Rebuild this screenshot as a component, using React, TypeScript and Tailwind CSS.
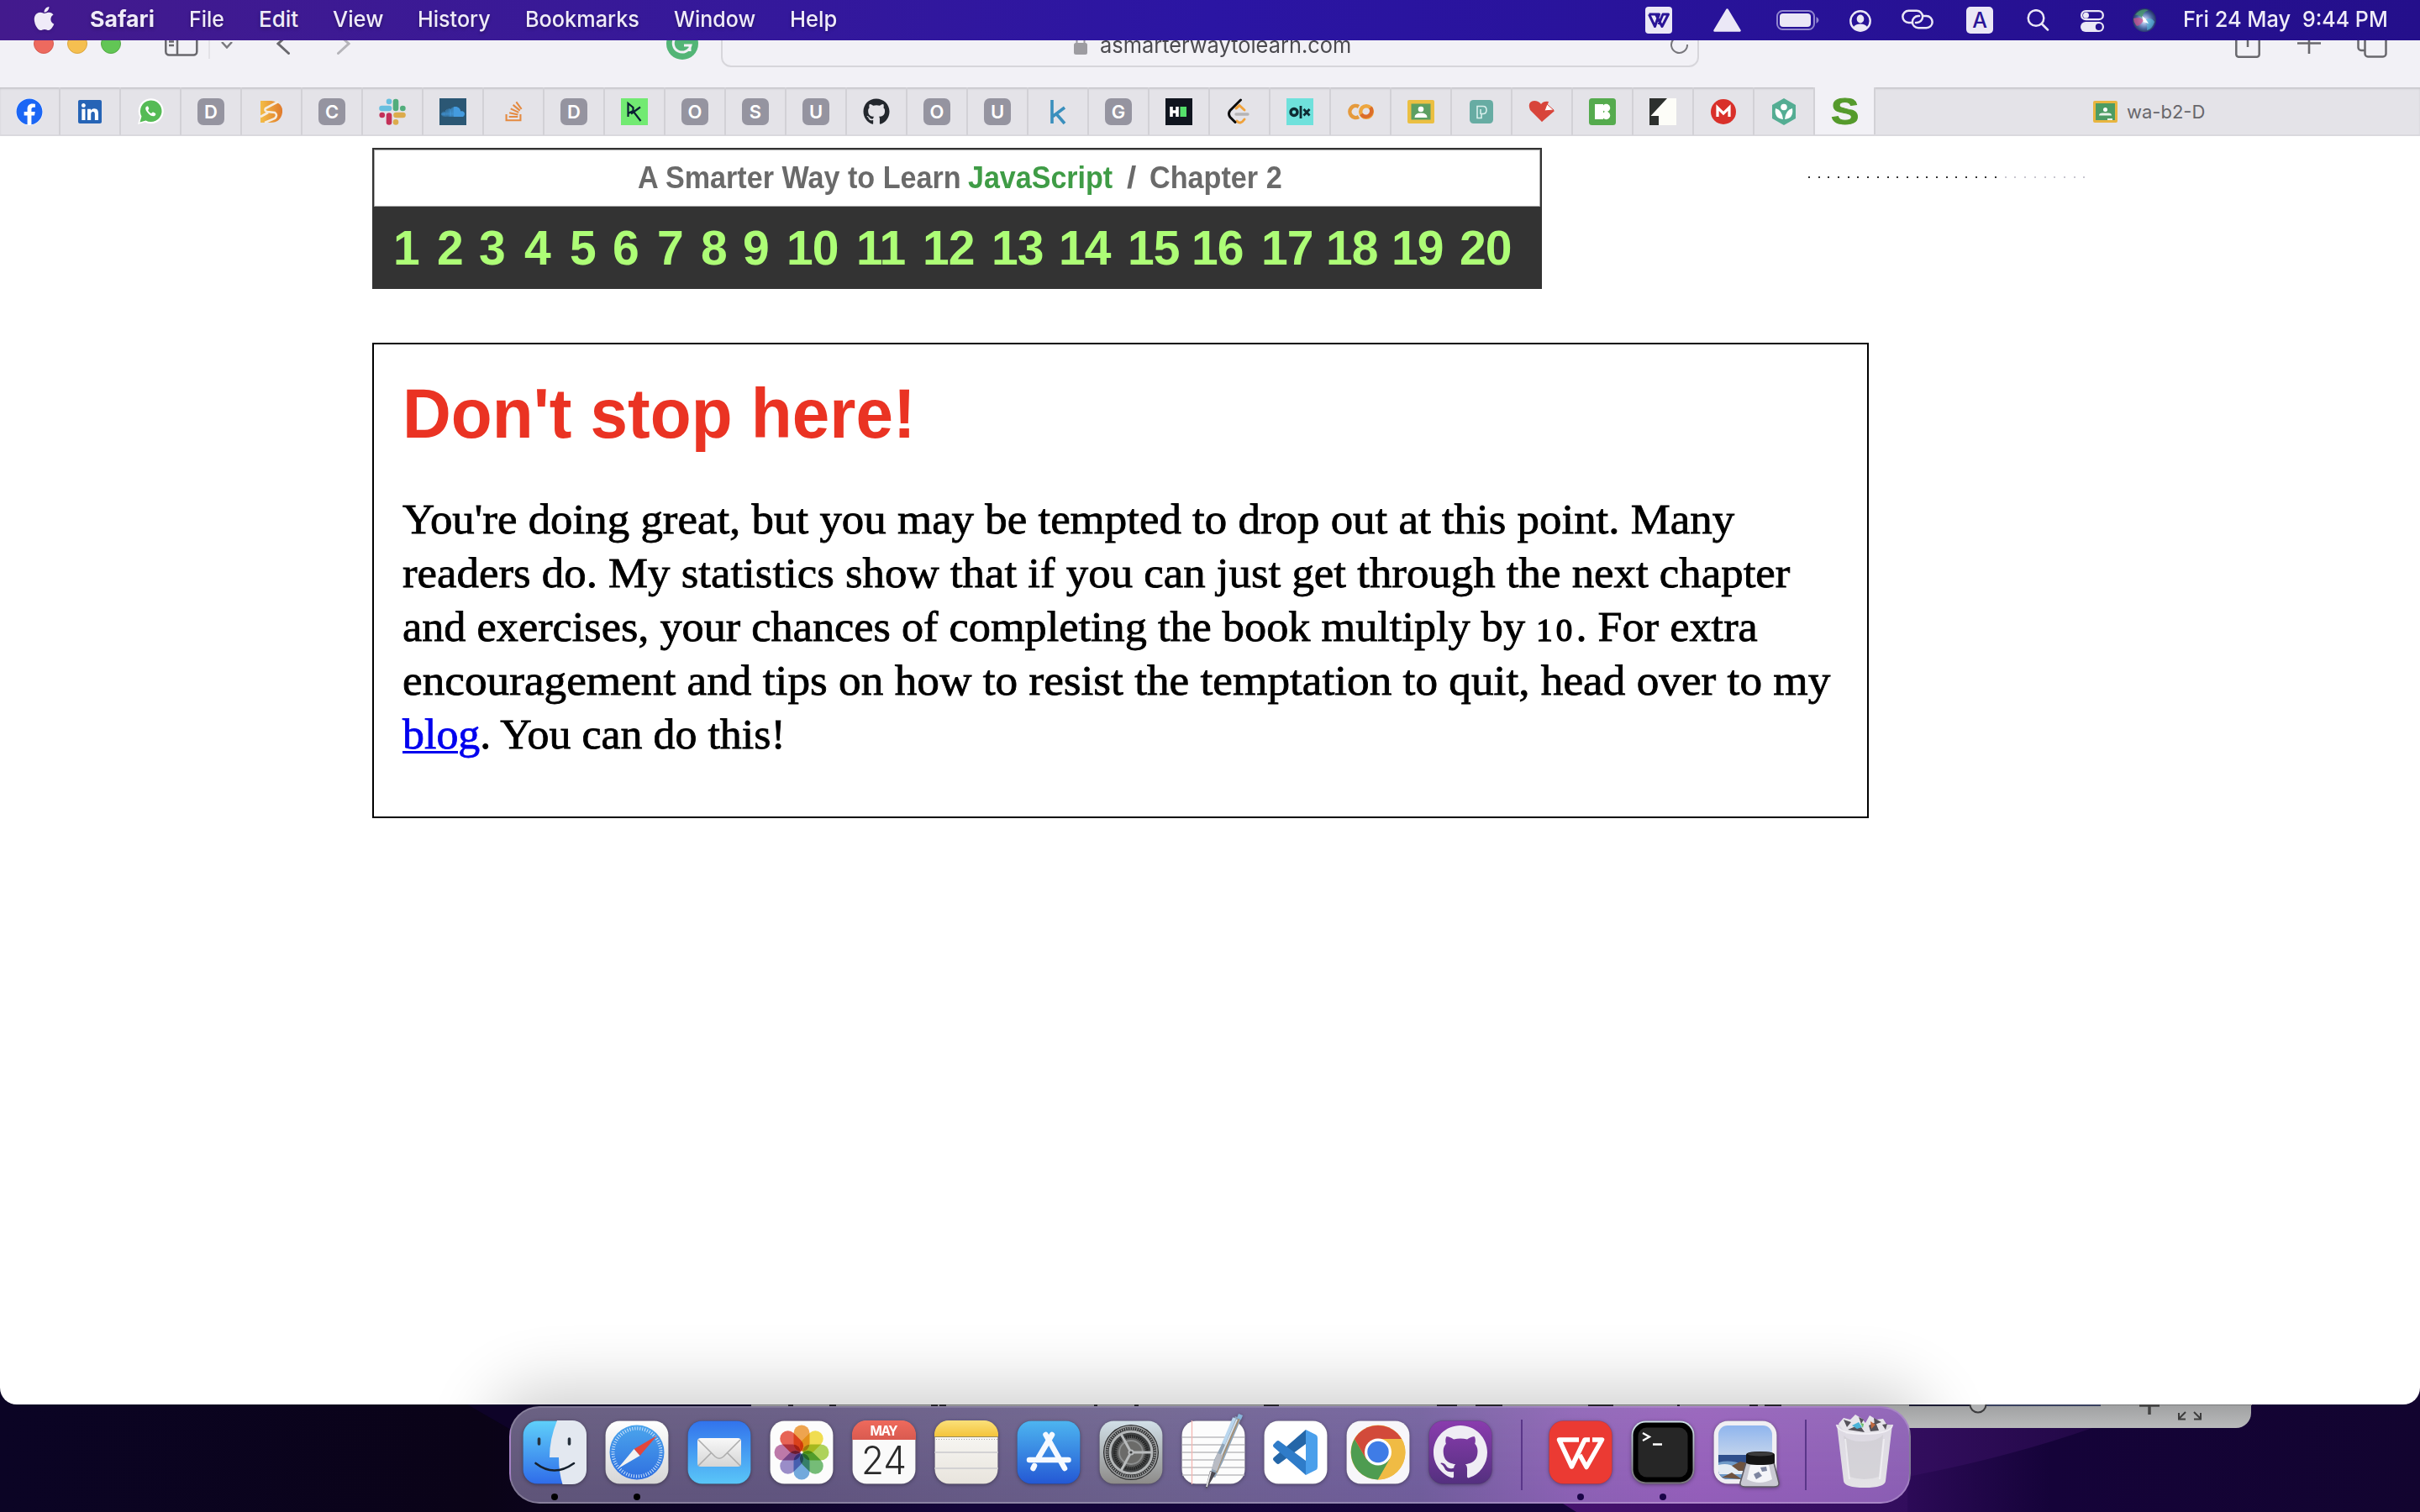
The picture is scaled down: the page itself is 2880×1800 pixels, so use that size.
import React, { useLayoutEffect, useRef, useState } from "react";
import {
  FaApple,
  FaFacebook,
  FaGithub,
  FaLinkedin,
  FaStackOverflow,
  FaSoundcloud,
} from "react-icons/fa";

/** One line of text stretched to an exact width. */
function Fit({ w, className = "", children }: { w: number; className?: string; children: React.ReactNode }) {
  const ref = useRef<HTMLSpanElement>(null);
  const [scale, setScale] = useState(1);
  useLayoutEffect(() => {
    if (ref.current) setScale(w / ref.current.offsetWidth);
  }, [w]);
  return (
    <span className={"block shrink-0 whitespace-nowrap " + className} style={{ width: w }}>
      <span ref={ref} className="inline-block origin-left" style={{ transform: `scaleX(${scale})` }}>
        {children}
      </span>
    </span>
  );
}

/* ---------- Menu bar ---------- */

const menus: [string, number][] = [
  ["File", 42],
  ["Edit", 47],
  ["View", 60],
  ["History", 87],
  ["Bookmarks", 136],
  ["Window", 97],
  ["Help", 56],
];

function MenuBar() {
  return (
    <header className="relative z-10 flex h-12 items-center bg-gradient-to-r from-[#431a8d] via-[#2b15a3] to-[#240f8b] pl-10 text-[26px] leading-[31px] text-[#efebf8]">
      <FaApple className="-mt-1 -ml-[3px] mr-[-3px] h-8 w-[31px] shrink-0 drop-shadow" />
      <nav className="flex gap-[41px] pb-[3px] pl-[42px] [text-shadow:0_2px_4px_rgba(0,0,0,0.3)]">
        <Fit w={77} className="font-bold">Safari</Fit>
        {menus.map(([m, w]) => (
          <Fit key={m} w={w} className="font-medium">{m}</Fit>
        ))}
      </nav>
      <svg className="ml-[962px] h-8 w-8 shrink-0" viewBox="0 0 32 32">
        <rect width="32" height="32" rx="4" fill="#ebe8f6" />
        <path d="M4.500 9h12L11.500 23.500 4.500 9M12.500 9l7.500 14.500L27.500 9H21l-5 12" fill="none" stroke="#2a1597" strokeWidth="3" strokeLinejoin="round" />
      </svg>
      <svg className="ml-[49px] h-7 w-[33px] shrink-0" viewBox="0 0 33 28">
        <path d="M16.5 1.5 31.5 26.5H1.5Z" fill="#ebe8f6" stroke="#ebe8f6" strokeWidth="2.5" strokeLinejoin="round" />
      </svg>
      <svg className="ml-[42px] h-6 w-[51px] shrink-0" viewBox="0 0 51 24">
        <rect x="1" y="1" width="44" height="22" rx="6.5" fill="none" stroke="#9186cf" strokeWidth="2" />
        <rect x="4" y="4" width="37" height="16" rx="4" fill="#ebe8f6" />
        <path d="M47.5 8q3 1.500 3 4t-3 4z" fill="#9186cf" />
      </svg>
      <svg className="ml-9 mt-[2px] h-[26px] w-[26px] shrink-0" viewBox="0 0 26 26">
        <circle cx="13" cy="13" r="11.7" fill="none" stroke="#ebe8f6" strokeWidth="2.4" />
        <ellipse cx="13" cy="10.500" rx="4.300" ry="5" fill="#ebe8f6" />
        <path d="M4.500 20.500q2.500-4 8.500-4t8.500 4q-3.500 4-8.500 4t-8.500-4z" fill="#ebe8f6" />
      </svg>
      <svg className="ml-9 -mt-[2px] h-6 w-[38px] shrink-0" viewBox="0 0 38 24" fill="none" stroke="#ebe8f6" strokeWidth="2.500" strokeLinecap="round">
        <path d="M12 16H8.500A7 7 0 0 1 8.500 1.700H18A7 7 0 0 1 18 16H17" />
        <path d="M26 8h3.500a7 7 0 0 1 0 14.300H20A7 7 0 0 1 20 8h1" />
      </svg>
      <span className="ml-[39px] flex h-8 w-8 shrink-0 items-center justify-center rounded-[5px] bg-[#ebe8f6] text-[25px] font-medium text-[#2a1597]">A</span>
      <svg className="ml-10 h-[26px] w-[27px] shrink-0" viewBox="0 0 27 26" fill="none" stroke="#ebe8f6" strokeWidth="2.500" strokeLinecap="round">
        <circle cx="11" cy="10.500" r="9.300" />
        <path d="m18 17.500 7 7" />
      </svg>
      <svg className="ml-[37px] mt-[2px] h-[26px] w-7 shrink-0" viewBox="0 0 28 26">
        <rect x="1.200" y="1.200" width="25.600" height="10" rx="5" fill="none" stroke="#ebe8f6" strokeWidth="2.300" />
        <circle cx="6.500" cy="6.200" r="3.500" fill="#ebe8f6" />
        <rect y="14" width="28" height="12" rx="6" fill="#ebe8f6" />
        <circle cx="21.800" cy="20" r="4" fill="#26118f" />
      </svg>
      <svg className="ml-[34px] h-7 w-7 shrink-0" viewBox="0 0 28 28">
        <defs>
          <radialGradient id="siri" cx="50%" cy="52%" r="50%">
            <stop offset="0" stopColor="#fff" />
            <stop offset=".3" stopColor="#9fb4e0" />
            <stop offset=".7" stopColor="#47649f" />
            <stop offset="1" stopColor="#263468" />
          </radialGradient>
        </defs>
        <circle cx="14" cy="14" r="14" fill="url(#siri)" />
        <path d="M3 8Q9-1 19 2q-8 3-7 10-5-5-9-4z" fill="#4a9a6b" opacity=".8" />
        <path d="M1 12q8-3 12 2-3 6-8 7-4-4-4-9z" fill="#c9528c" opacity=".75" />
        <path d="M14 14q8-5 12 2-3 9-9 10 1-7-3-12z" fill="#58bfe0" opacity=".6" />
        <path d="m11 9 4 3 4 6-6-2z" fill="#fff" />
      </svg>
      <div className="flex pb-[3px] font-medium">
        <Fit w={128} className="ml-[32px]">Fri 24 May</Fit>
        <Fit w={102} className="ml-[14px]">9:44 PM</Fit>
      </div>
    </header>
  );
}

/* ---------- Browser toolbar ---------- */

function Toolbar() {
  return (
    <div className="h-14 overflow-hidden bg-[#f2f1f6]">
      <div className="-mt-12 flex h-[104px] translate-y-0 items-center pl-10">
        <div className="flex gap-4">
          <i className="h-6 w-6 rounded-full border border-[#d65a50] bg-[#ed6a5f]" />
          <i className="h-6 w-6 rounded-full border border-[#dba63f] bg-[#f5bf50]" />
          <i className="h-6 w-6 rounded-full border border-[#55a945] bg-[#62c655]" />
        </div>
        <svg className="ml-[52px] h-[30px] w-10 shrink-0" viewBox="0 0 40 30" fill="none" stroke="#69686d" strokeWidth="2.500">
          <rect x="1.300" y="1.300" width="37" height="27.200" rx="4" />
          <path d="M15 1v28M5 8h6M5 12.500h6M5 17h6" />
        </svg>
        <i className="ml-3 h-9 w-[2px] bg-[#e3e2e7]" />
        <svg className="ml-[13px] mt-1 h-2 w-[14px] shrink-0" viewBox="0 0 14 8" fill="none" stroke="#7a797e" strokeWidth="2.500">
          <path d="m1 0 6 6.500L13 0" />
        </svg>
        <svg className="ml-[52px] h-[26px] w-4 shrink-0" viewBox="0 0 16 26" fill="none" stroke="#69686d" strokeWidth="3" strokeLinecap="round">
          <path d="M14.500 1.500 2 13l12.500 11.500" />
        </svg>
        <svg className="ml-14 h-[26px] w-4 shrink-0" viewBox="0 0 16 26" fill="none" stroke="#b5b4b9" strokeWidth="3" strokeLinecap="round">
          <path d="M1.500 1.500 14 13 1.500 24.500" />
        </svg>
        <svg className="ml-[376px] h-[38px] w-[38px] shrink-0" viewBox="0 0 38 38">
          <circle cx="19" cy="19" r="19" fill="#53b576" />
          <path d="M27 12a10.500 10.500 0 1 0 2 9h-8M28 28v-7" fill="none" stroke="#f2f1f6" strokeWidth="3" />
        </svg>
        <div className="ml-[27px] flex h-14 w-[1164px] shrink-0 items-center rounded-xl border-2 border-[#d7d6db]">
          <svg className="ml-[418px] h-[25px] w-4 shrink-0" viewBox="0 0 16 25">
            <path d="M3.500 12V7a4.500 4.500 0 0 1 9 0v5" fill="none" stroke="#9d9ca1" strokeWidth="2" />
            <rect y="11" width="16" height="14" rx="2.500" fill="#9d9ca1" />
          </svg>
          <Fit w={299} className="ml-[15px] mt-[3px] text-[26px] leading-[31px] text-[#4b4a4f]">asmarterwaytolearn.com</Fit>
          <svg className="ml-auto mr-[10px] h-6 w-[22px]" viewBox="0 0 22 24" fill="none" stroke="#77767b" strokeWidth="2">
            <path d="M4 6.500A9.500 9.500 0 1 0 20 13M5 7h6V2" />
          </svg>
        </div>
        <svg className="ml-[638px] h-9 w-[30px] shrink-0" viewBox="0 0 30 36" fill="none" stroke="#69686d" strokeWidth="2.500">
          <path d="M9 9H4a2.700 2.700 0 0 0-2.700 2.700V31A3 3 0 0 0 4 33.700h22a3 3 0 0 0 2.700-2.700V11.700A2.700 2.700 0 0 0 26 9h-5M15 22V2" />
        </svg>
        <svg className="ml-11 -mt-[3px] h-7 w-7 shrink-0" viewBox="0 0 28 28" stroke="#69686d" strokeWidth="2.600">
          <path d="M0 14.500h28M14 1v26" />
        </svg>
        <svg className="ml-[43px] h-9 w-9 shrink-0" viewBox="0 0 36 36" fill="none" stroke="#69686d" strokeWidth="2.500">
          <rect x="9.500" y="8" width="25" height="25.500" rx="3.500" />
          <path d="M9 26H5a3.500 3.500 0 0 1-3.500-3.500V4" />
        </svg>
      </div>
    </div>
  );
}

/* ---------- Tab strip ---------- */

function Letter({ c }: { c: string }) {
  return <span className="flex h-8 w-8 items-center justify-center rounded-[7px] bg-[#9594a0] text-[22px] leading-none font-semibold text-white">{c}</span>;
}

function Svg32({ children }: { children: React.ReactNode }) {
  return <svg className="h-8 w-8" viewBox="0 0 32 32">{children}</svg>;
}

const favicons: React.ReactNode[] = [
  <span className="rounded-full bg-white"><FaFacebook className="h-8 w-8 text-[#1b66f5]" /></span>,
  <span className="flex h-8 w-8 items-center justify-center"><FaLinkedin className="h-8 w-8 bg-[linear-gradient(white,white)] bg-[length:22px_22px] bg-center bg-no-repeat text-[#2664b6]" /></span>,
  <Svg32>
    <path d="M1 31 3.500 22.500A15 15 0 1 1 9.500 28.500z" fill="#fff" />
    <path d="M3.500 28.500 5.500 21.500a12.800 12.800 0 1 1 5 5z" fill="#55bb55" />
    <path d="M12 9.500c-2.500 1-2.500 4 1 8s7.500 5 9 2.500c.7-1.200.3-2-.8-2.500l-2-1c-1-.3-1.500 1.500-2.200 1.500-1.500-.5-3.300-2.300-3.800-3.800 0-.8 1.200-1.200 1-2.200l-1-2.200c-.2-.5-.7-.5-1.200-.3z" fill="#fff" />
  </Svg32>,
  <Letter c="D" />,
  <Svg32>
    <defs><linearGradient id="sub" x1="0" x2="1"><stop offset="0" stopColor="#f3bd47" /><stop offset="1" stopColor="#e07a2c" /></linearGradient></defs>
    <path d="M3 3h13q14 2 13 14-2 12-14 12H3z" fill="url(#sub)" />
    <path d="M24 4 9 12q-2 3 2 4l9 1q4 3 0 7L8 29M3 22l9-5" stroke="#f5ecdf" strokeWidth="2.600" fill="none" />
  </Svg32>,
  <Letter c="C" />,
  <Svg32>
    <g strokeWidth="6.600" strokeLinecap="round">
      <path d="M3.500 12h8.500" stroke="#68bfdf" /><path d="M12 3.800v.1" stroke="#68bfdf" />
      <path d="M20 4v8" stroke="#52ad7c" /><path d="M28.300 12h.1" stroke="#52ad7c" />
      <path d="M20.500 20h8" stroke="#dcab4c" /><path d="M20 28.300v.1" stroke="#dcab4c" />
      <path d="M12 20.500v8" stroke="#c33058" /><path d="M3.700 20h.1" stroke="#c33058" />
    </g>
  </Svg32>,
  <span className="flex h-8 w-8 items-center justify-center bg-[#2b5774]"><FaSoundcloud className="h-7 w-7 text-[#449bdf]" /></span>,
  <FaStackOverflow className="h-[27px] w-[27px] text-[#e48a41]" />,
  <Letter c="D" />,
  <Svg32>
    <rect width="32" height="32" fill="#72ea72" />
    <path d="M8.500 18V6l6 5v4l-6 3v4M23 10.500 12 18.500M15 16l8.500 11" fill="none" stroke="#0b1f33" strokeWidth="2.200" />
  </Svg32>,
  <Letter c="O" />,
  <Letter c="S" />,
  <Letter c="U" />,
  <FaGithub className="h-8 w-8 text-[#23272d]" />,
  <Letter c="O" />,
  <Letter c="U" />,
  <Svg32><path d="M9 2v28M24 11 10 21.500M14.500 19 24 30" fill="none" stroke="#3a8fbd" strokeWidth="3.600" /></Svg32>,
  <Letter c="G" />,
  <Svg32>
    <rect width="32" height="32" fill="#10151f" />
    <path d="M7 10v12M14 10v12M7 16h7" stroke="#fff" strokeWidth="3.600" /><rect x="17.500" y="10" width="7.500" height="12" fill="#55e06a" />
  </Svg32>,
  <Svg32>
    <path d="M12 12l4-3.500 6 5.500M13 27q4 5 9-2" fill="none" stroke="#f0a23b" strokeWidth="3" strokeLinecap="round" />
    <path d="M17.500 2 5 14.500q-3 4 0 8l6 6" fill="none" stroke="#0c0c0c" strokeWidth="3" strokeLinecap="round" />
    <path d="M12 19h14" stroke="#b5b4b5" strokeWidth="3.400" strokeLinecap="round" />
  </Svg32>,
  <Svg32>
    <rect width="32" height="32" fill="#6fe1dc" />
    <circle cx="9" cy="16.500" r="4" fill="none" stroke="#0e2b33" strokeWidth="3.400" />
    <path d="M17 9v15M20.500 13l7 7.500M27.500 13l-7 7.500" stroke="#0e2b33" strokeWidth="2.800" />
  </Svg32>,
  <Svg32>
    <path d="M14 10a7 7 0 1 0 0 12" fill="none" stroke="#e59a3c" strokeWidth="4.500" />
    <circle cx="23" cy="16" r="6.800" fill="none" stroke="#eda63e" strokeWidth="4.500" />
    <path d="M17 19a6.800 6.800 0 0 0 11-8" fill="none" stroke="#dc6d2b" strokeWidth="4.500" />
  </Svg32>,
  <Svg32>
    <rect y="2" width="32" height="28" rx="2" fill="#ebbf42" /><rect x="4.500" y="6.500" width="23" height="19" fill="#5c9f62" />
    <circle cx="16" cy="13" r="3.300" fill="#fff" /><path d="M8.500 23q0-5.500 7.500-5.500t7.500 5.500z" fill="#fff" />
  </Svg32>,
  <Svg32>
    <rect x="2" y="2" width="28" height="28" rx="4.500" fill="#67aca3" />
    <path d="M11 9.500h7q4 0 4 4.500t-4 4.500h-2v5h-5zm4 3.500v6" fill="none" stroke="#d9efec" strokeWidth="1.600" />
  </Svg32>,
  <Svg32>
    <path d="M16 28 2 14Q-2 4 7 3q5 0 8 4 3-4 9-3" fill="#d8453b" />
    <path d="m16 28 15-13-8-6-11 9z" fill="#d8453b" /><path d="m22 7 8 7-11 1z" fill="#fff" stroke="#d8453b" />
  </Svg32>,
  <Svg32>
    <rect width="32" height="32" rx="3.500" fill="#55ab4e" />
    <rect x="7" y="7" width="10" height="18" fill="#fff" /><circle cx="20.500" cy="11.500" r="4.700" fill="#fff" /><circle cx="20.500" cy="20.500" r="4.700" fill="#fff" />
  </Svg32>,
  <Svg32><rect width="32" height="32" fill="#fdfdf8" /><path d="M0 0h21L1.500 21H11v11H0z" fill="#2d302e" /></Svg32>,
  <Svg32><circle cx="16" cy="16" r="15" fill="#d9302a" /><path d="M9 22V11l7 7 7-7v11" fill="none" stroke="#fff" strokeWidth="3.200" /></Svg32>,
  <Svg32>
    <path d="M16 0 30 8v16l-14 8L2 24V8z" fill="#54ad93" />
    <circle cx="16" cy="10.500" r="3.800" fill="#fff" /><path d="M15 25Q4 24 6 12q8 2 9 13zM17 25q11-1 9-13-8 2-9 13z" fill="#fff" />
  </Svg32>,
];

function TabStrip() {
  return (
    <div className="flex h-[58px] border-b-2 border-[#dad9de] bg-[#e4e3e8] shadow-[inset_0_2px_2px_#c9c8cd]">
      {favicons.map((icon, i) => (
        <div key={i} className="flex h-[57px] w-[72px] shrink-0 items-center justify-center border-r-2 border-[#d2d1d6]">{icon}</div>
      ))}
      <div className="flex h-14 w-[72px] shrink-0 items-center justify-center border-r-2 border-[#d2d1d6] bg-[#f2f1f6] text-[44px] leading-8 font-bold text-[#559a2c]">
        <Fit w={33} className="pt-[2px] font-['Liberation_Sans'] [-webkit-text-stroke:1px]">S</Fit>
      </div>
      <div className="flex h-14 flex-1 items-center pt-px pl-[259px]">
        <svg className="h-[26px] w-[29px]" viewBox="0 0 29 26">
          <rect width="29" height="26" rx="2" fill="#e8b53f" /><rect x="3" y="3" width="23" height="20" fill="#4c9c63" />
          <circle cx="14.500" cy="10.500" r="2.500" fill="#fff" /><path d="M7 17.500q0-3 4-3h7q4 0 4 3zM17 21h6v2h-6z" fill="#e9f3ea" />
        </svg>
        <Fit w={93} className="ml-[11px] text-[22px] leading-7 text-[#68676c]">wa-b2-D</Fit>
      </div>
    </div>
  );
}

/* ---------- Page ---------- */

const chapterWidths = [52, 50, 54, 54, 51, 53, 52, 50, 52, 83, 79, 82, 80, 82, 76, 83, 77, 78, 81, 70];

function Chapters() {
  return (
    <div className="w-[1392px] bg-[#333333] font-['Liberation_Sans'] font-bold">
      <div className="p-[2px] pb-0">
        <h2 className="flex h-[68px] bg-white pt-[13px] pl-[314px] text-[37px] leading-[41px] text-[#6a6a6a] shadow-[inset_0_0_0_1px_#aaa]">
          <Fit w={385}>A Smarter Way to Learn</Fit>
          <Fit w={172} className="ml-[8px] text-[#3f9c46]">JavaScript</Fit>
          <Fit w={11} className="ml-[17px]">/</Fit>
          <Fit w={158} className="ml-[16px]">Chapter 2</Fit>
        </h2>
      </div>
      <div className="flex h-[98px] pt-[16px] pl-[25px] text-[57px] leading-[66px] tracking-[-1px] text-[#adfd76]">
        {chapterWidths.map((w, i) => (
          <span key={i} className="shrink-0" style={{ width: w }}>{i + 1}</span>
        ))}
      </div>
    </div>
  );
}

function Page() {
  return (
    <main className="relative h-[1510px] overflow-hidden rounded-b-[20px] bg-white pt-[14px] pl-[443px]">
      <div className="flex">
        <Chapters />
        <div className="mt-[34px] ml-[317px] flex gap-[9.700px]">
          {Array.from({ length: 29 }, (_, i) => (
            <i key={i} className={i < 20 ? "h-[2px] w-[2px] bg-[#333]" : "h-[2px] w-[2px] bg-[#c8c6d0]"} />
          ))}
        </div>
      </div>
      <section className="mt-16 h-[566px] w-[1781px] border-2 border-black pt-[35px] pl-[34px]">
        <h1 className="font-['Liberation_Sans'] text-[84px] leading-[94px] font-bold text-[#ea3323]">
          <Fit w={611}>Don't stop here!</Fit>
        </h1>
        <p className="mt-[47px] font-['Liberation_Serif'] text-[51px] leading-[64px] text-black [-webkit-text-stroke:0.8px]">
          <Fit w={1585}>You're doing great, but you may be tempted to drop out at this point. Many</Fit>
          <Fit w={1651}>readers do. My statistics show that if you can just get through the next chapter</Fit>
          <Fit w={1613}>
            and exercises, your chances of completing the book multiply by <span className="text-[38px] leading-none tracking-[4px] [-webkit-text-stroke:1.4px]">10</span>. For extra
          </Fit>
          <Fit w={1699}>encouragement and tips on how to resist the temptation to quit, head over to my</Fit>
          <Fit w={456}>
            <a className="text-[#0000ee] underline decoration-[3px] underline-offset-[3px]">blog</a>. You can do this!
          </Fit>
        </p>
      </section>
      <div className="absolute -bottom-[118px] left-[606px] h-[116px] w-[1668px] rounded-[36px] shadow-[0_0_80px_20px_rgba(0,0,0,0.2)]" />
    </main>
  );
}

/* ---------- Desktop and dock ---------- */

function Wallpaper() {
  return (
    <svg className="absolute inset-x-0 bottom-0 h-[160px] w-full" viewBox="0 1640 2880 160">
      <defs>
        <linearGradient id="wall" x1="0" x2="1">
          <stop offset="0" stopColor="#0b0425" /><stop offset=".2" stopColor="#0a0317" />
          <stop offset=".4" stopColor="#14053a" /><stop offset=".85" stopColor="#150339" /><stop offset="1" stopColor="#12042f" />
        </linearGradient>
        <linearGradient id="hill" gradientUnits="userSpaceOnUse" x1="1820" x2="2500" y1="0" y2="0"><stop offset="0" stopColor="#47126f" /><stop offset=".7" stopColor="#310d5c" /><stop offset="1" stopColor="#210845" /></linearGradient>
        <linearGradient id="glow" gradientUnits="userSpaceOnUse" x1="2270" x2="2440" y1="0" y2="0"><stop offset="0" stopColor="#2c0a57" /><stop offset="1" stopColor="#2c0a57" stopOpacity="0" /></linearGradient>
        <linearGradient id="bar" x1="0" x2="0" y1="0" y2="1"><stop offset="0" stopColor="#949596" /><stop offset="1" stopColor="#b9babb" /></linearGradient>
      </defs>
      <rect y="1640" width="2880" height="160" fill="url(#wall)" />
      <path d="M556 1672 760 1790 1340 1790 1340 1672z" fill="#0e0328" />
      <rect x="2270" y="1700" width="170" height="100" fill="url(#glow)" />
      <path d="M1860 1790 1820 1672H2560L2490 1700Q2390 1735 2270 1758V1800H1876z" fill="url(#hill)" />
      <path d="M894 1660h1785v22a18 18 0 0 1-18 18H894z" fill="url(#bar)" />
      <path d="M894 1672.500h1786" stroke="#77787a" />
      <path d="M2272 1673h92" stroke="#1b1b33" strokeWidth="2" /><path d="M2364 1673h136" stroke="#39405f" strokeWidth="2" />
      <circle cx="2354" cy="1672" r="9.500" fill="#b0b1b2" stroke="#3b3b3d" strokeWidth="2" />
      <path d="M2546 1673h24M2558 1672v12" stroke="#444" strokeWidth="3.500" />
      <path d="m2601 1681-8 8M2593 1682v7.500h8M2611 1681l8 8M2619 1682v7.500h-8" stroke="#3d3d3d" strokeWidth="2" fill="none" />
      <path d="M938 1673h6M987 1673h8M1108 1673h8M1118 1673h8M1302 1673h4M1350 1673h5M1504 1673h18M1710 1673h24M1756 1673h32M1890 1673h30M1996 1673h3M2082 1673h10M2100 1673h20" stroke="#26262a" strokeWidth="2" />
    </svg>
  );
}

function AppIcon({ children, bg, stroke = "rgba(0,0,0,.08)" }: { children?: React.ReactNode; bg: string; stroke?: string }) {
  return (
    <svg className="h-[76px] w-[76px] overflow-visible drop-shadow-[0_1px_2px_rgba(0,0,0,0.35)]" viewBox="0 0 76 76">
      <rect x=".5" y=".5" width="75" height="75" rx="17" fill={bg} stroke={stroke} />
      {children}
    </svg>
  );
}

function Defs() {
  const g: [string, string, string][] = [
    ["finder", "#5fd0fa", "#2f6ce9"],
    ["white", "#ffffff", "#d6d6d6"],
    ["compass", "#4ba5ec", "#2f6fe0"],
    ["mail", "#3273ec", "#5ac6f8"],
    ["env", "#f8f8f8", "#d5d5d5"],
    ["notes", "#fbfbf8", "#e8e4dd"],
    ["noteTop", "#fae07a", "#f4c43b"],
    ["store", "#4db5f0", "#2458d4"],
    ["gear", "#d2e0e8", "#8d8b89"],
    ["git", "#8a3cae", "#54307f"],
    ["calTop", "#ee6a5c", "#d95a50"],
    ["sky", "#8fb5ee", "#c3d4ec"],
    ["term", "#d0e2ea", "#77747a"],
    ["can", "#dcd8e2", "#e4e3e6"],
  ];
  return (
    <svg className="absolute h-0 w-0">
      <defs>
        {g.map(([id, a, b]) => (
          <linearGradient key={id} id={id} x1="0" x2="0" y1="0" y2="1"><stop offset="0" stopColor={a} /><stop offset="1" stopColor={b} /></linearGradient>
        ))}
        <clipPath id="tile"><rect width="76" height="76" rx="17" /></clipPath>
        <clipPath id="photo"><rect x="6" y="6" width="64" height="64" rx="11" /></clipPath>
      </defs>
    </svg>
  );
}

const petals = ["#f09a37", "#f2dc3a", "#a5cf45", "#63b565", "#5f9fdb", "#8e7fc4", "#b8689f", "#e8503f"];

const appsLeft: [string, boolean, React.ReactNode][] = [
  ["Finder", true,
    <AppIcon bg="url(#finder)">
      <path clipPath="url(#tile)" d="M41 0Q32 22 32 44h11q0 18 4.500 32H76V0z" fill="#e3e8f0" />
      <path d="M19.500 22v6M55.500 22v6" stroke="#26303c" strokeWidth="3.600" strokeLinecap="round" />
      <path d="M15.500 51q22 17 45.500 0" fill="none" stroke="#16202c" strokeWidth="2.600" strokeLinecap="round" />
    </AppIcon>],
  ["Safari", true,
    <AppIcon bg="url(#white)">
      <circle cx="38" cy="38" r="32.500" fill="url(#compass)" />
      <circle cx="38" cy="38" r="28.500" fill="none" stroke="#cfe4fa" strokeWidth="4" strokeDasharray="1 1.987" />
      <path d="M62 18 41.500 42 34.500 34z" fill="#e2463c" /><path d="M15 57.500 34.500 34l7 8z" fill="#f2f2f2" />
    </AppIcon>],
  ["Mail", false,
    <AppIcon bg="url(#mail)">
      <rect x="12" y="21" width="52" height="34" rx="4" fill="url(#env)" />
      <path d="m13 23 20 20q5 4.500 10 0l20-20M13 54l15-15M63 54 48 39" fill="none" stroke="#adadad" strokeWidth="1.600" />
    </AppIcon>],
  ["Photos", false,
    <AppIcon bg="#fcfcfc">
      {petals.map((c, i) => (
        <rect key={c} x="28.500" y="5.500" width="19" height="31.500" rx="9.500" fill={c} opacity=".88" className="mix-blend-multiply" transform={`rotate(${i * 45} 38 38)`} />
      ))}
      <circle cx="38" cy="38" r="1.500" fill="#fff" />
    </AppIcon>],
  ["Calendar", false,
    <AppIcon bg="#fafafa">
      <path clipPath="url(#tile)" d="M0 0h76v23H0z" fill="url(#calTop)" />
      <text x="38" y="18" textAnchor="middle" fontSize="15.500" fontWeight="700" fill="#fff" textLength="33">MAY</text>
      <text x="38" y="64" textAnchor="middle" fontSize="46" fontWeight="300" fill="#2a2a2a" textLength="54" lengthAdjust="spacingAndGlyphs">24</text>
    </AppIcon>],
  ["Notes", false,
    <AppIcon bg="url(#notes)">
      <path clipPath="url(#tile)" d="M0 0h76v19H0z" fill="url(#noteTop)" />
      <path d="M0 19.500h76" stroke="#9a8a5a" /><path d="M2 22.500h73" stroke="#a9a9a9" strokeDasharray="1 2" />
      <path d="M0 38h76M0 57h76" stroke="#c9c9cd" strokeWidth="1.400" />
    </AppIcon>],
  ["App Store", false,
    <AppIcon bg="url(#store)">
      <g stroke="#f6faff" strokeWidth="6.500" strokeLinecap="round">
        <path d="M15 47h46.500" /><path d="M42 17 26 44M21 54l-1.500 3" /><path d="m34.500 17 22.500 40" />
      </g>
    </AppIcon>],
  ["System Settings", false,
    <AppIcon bg="url(#gear)">
      <circle cx="38" cy="38" r="33" fill="#2a2b2c" />
      <circle cx="38" cy="38" r="31" fill="none" stroke="#a2a4a5" strokeWidth="1.500" />
      <circle cx="38" cy="38" r="28.500" fill="none" stroke="#8e9091" strokeWidth="3" strokeDasharray="1.500 1.200" />
      <circle cx="38" cy="38" r="25" fill="#3f4142" stroke="#b3b6b7" strokeWidth="3" />
      <circle cx="38" cy="38" r="19" fill="#5f6060" stroke="#232424" strokeWidth="4" strokeDasharray="1.500 1" />
      <circle cx="38" cy="38" r="14" fill="#6b6b69" stroke="#8d8f8f" strokeWidth="2" />
      <path d="M38 38h26M38 38 26 16M38 38 26 60" stroke="#b9bcbd" strokeWidth="3" />
      <circle cx="38" cy="38" r="3.500" fill="#b9bcbd" /><circle cx="38" cy="38" r="1.600" fill="#3d3e3e" />
    </AppIcon>],
  ["TextEdit", false,
    <AppIcon bg="#fcfcfc">
      <path d="M1 20h74M1 29h74M1 38h74M1 47h74M1 56h74M1 65h74" stroke="#bcbcbe" strokeWidth="1.500" />
      <path d="M12.500 0v76" stroke="#f3b7b2" strokeWidth="1.300" />
      <path d="m64-5 7 3-22 52-9 18-6-2 5-19z" fill="#8fa3b6" />
      <path d="M69-3 46 50l-4 12" fill="none" stroke="#ab8f6c" strokeWidth="1.600" />
      <path d="M63-3 50 28" stroke="#b9d6ee" strokeWidth="4" /><path d="m66-1-24 55" stroke="#dfe7ee" strokeWidth="1.600" />
      <path d="m46 40-7 19" stroke="#b9bcc4" strokeWidth="7" /><path d="m34 60 7 2.500L30 81l-1-1z" fill="#4d4b52" /><path d="m35 61-5 18" stroke="#e7e7ea" strokeWidth="1.600" />
      <path d="m68-8 5 2-2 5-5-2z" fill="#87b5da" />
    </AppIcon>],
  ["Visual Studio Code", false,
    <AppIcon bg="#ffffff">
      <path d="M50 11v17L19 51q-2 2-4 0l-3-3q-2-2 0-4z" fill="#2466a8" />
      <path d="M50 65V48L19 25q-2-2-4 0l-3 3q-2 2 0 4z" fill="#2f7cc9" />
      <path d="m50 11 12 6q2 1 2 4v34q0 3-2 4l-12 6z" fill="#4a9feb" />
    </AppIcon>],
  ["Google Chrome", false,
    <AppIcon bg="#f7f6fa">
      <circle cx="38" cy="38" r="32.500" fill="#f0bb44" />
      <path d="M10 22A32.500 32.500 0 0 0 38 70.500L52 46 38 38 24 46z" fill="#4e9c51" />
      <path d="M38 22h28.200A32.500 32.500 0 0 1 38 70.500L52 46z" fill="#f0bb44" />
      <path d="M10 22A32.500 32.500 0 0 1 66 22H38z" fill="#d24a3a" /><path d="m10 22 14 24 14-24z" fill="#d24a3a" />
      <circle cx="38" cy="37.500" r="16" fill="#fff" /><circle cx="38" cy="37.500" r="12.700" fill="#3f7ce6" />
    </AppIcon>],
  ["GitHub Desktop", false,
    <AppIcon bg="url(#git)">
      <svg x="6" y="6" width="64" height="64" viewBox="0 0 16 16"><path fill="#efedf4" d="M8 0C3.580 0 0 3.580 0 8c0 3.540 2.290 6.530 5.470 7.590.4.070.55-.17.55-.38 0-.19-.01-.82-.01-1.490-2.010.37-2.530-.49-2.690-.94-.09-.23-.48-.94-.82-1.130-.28-.15-.68-.52-.01-.53.63-.01 1.080.58 1.230.82.72 1.210 1.870.87 2.330.66.07-.52.28-.87.51-1.070-1.780-.2-3.640-.89-3.640-3.950 0-.87.31-1.590.82-2.150-.08-.2-.36-1.020.08-2.120 0 0 .67-.21 2.200.82.64-.18 1.320-.27 2-.27s1.360.09 2 .27c1.530-1.040 2.200-.82 2.200-.82.44 1.100.16 1.920.08 2.120.51.56.82 1.270.82 2.150 0 3.070-1.870 3.750-3.650 3.950.29.25.54.73.54 1.480 0 1.070-.01 1.930-.01 2.200 0 .21.15.46.55.38A8.010 8.010 0 0 0 16 8c0-4.420-3.580-8-8-8z" /></svg>
    </AppIcon>],
];

const appsRight: [string, boolean, React.ReactNode][] = [
  ["WPS Office", true,
    <AppIcon bg="#eb3a33">
      <path d="M36 23H12.500L27.500 55 43 23h6" fill="none" stroke="#fff" strokeWidth="5.500" strokeLinejoin="round" />
      <path d="m37 41 8 14.500L63.500 23H52" fill="none" stroke="#fff" strokeWidth="5.500" strokeLinejoin="round" />
    </AppIcon>],
  ["Terminal", true,
    <AppIcon bg="url(#term)">
      <rect x="2.500" y="2.500" width="71" height="71" rx="15" fill="#000" />
      <rect x="8.500" y="8.500" width="59" height="59" rx="10" fill="#262626" />
      <path d="m14 15 8 4.500-8 4.500M26 28.500h11" fill="none" stroke="#fff" strokeWidth="2.300" />
    </AppIcon>],
  ["Preview", false,
    <AppIcon bg="#f0eff3">
      <g clipPath="url(#photo)">
        <path d="M6 6h64v36H6z" fill="url(#sky)" /><path d="M6 41h64v29H6z" fill="#2f4f8c" />
        <path d="M6 50q15-4 30 3l34 2v15H6z" fill="#6f9ac8" /><path d="M6 53q12-3 20 3t16 2v6H6z" fill="#e4ecf4" />
        <path d="m22 54 10-5 16 3v8H30zM10 68l12-6 12 8z" fill="#6f5340" />
      </g>
      <path d="m39 50-7 24q-1 5 6 5h34q7 0 6-5l-6-24z" fill="#c9c9d2" stroke="#5d5a63" strokeWidth="1.600" />
      <path d="M44 53h22l4 17q-15 8-30 0z" fill="#f4f5f8" /><path d="m48 64 6-3 4 5-7 4zM56 56l7-1 1 5-6 1z" fill="#7e86a0" />
      <path d="M39 41q0-4 17-4t17 4v9q0 3-17 3t-17-3z" fill="#141414" /><ellipse cx="56" cy="40" rx="15" ry="2.600" fill="#3b3b3b" />
    </AppIcon>],
];

function DockApp({ name, running, dark, children }: { name: string; running: boolean; dark?: boolean; children: React.ReactNode }) {
  return (
    <div aria-label={name} className="flex w-[98px] shrink-0 flex-col items-center pt-[15px]">
      {children}
      {running && <i className={dark ? "mt-[11px] h-2 w-2 rounded-full bg-[#1a0548]" : "mt-[11px] h-2 w-2 rounded-full bg-black"} />}
    </div>
  );
}

function Dock() {
  return (
    <div className="relative mt-[2px] ml-[606px] flex h-[116px] w-[1668px] rounded-[36px] border-2 border-white/20 bg-[linear-gradient(180deg,rgba(255,255,255,0.08),transparent),linear-gradient(90deg,#5e5478_0%,#60547f_22%,#6a5f8c_45%,#6f5c9b_65%,#8b60b4_76%,#935db9_85%,#8a5db3_100%)] pl-[3px]">
      {appsLeft.map(([name, running, icon]) => (
        <DockApp key={name} name={name} running={running}>{icon}</DockApp>
      ))}
      <i className="mt-[14px] ml-[23px] h-[84px] w-[2px] shrink-0 bg-[#5a3689]" />
      <div className="ml-[20px] flex">
        {appsRight.map(([name, running, icon]) => (
          <DockApp key={name} name={name} running={running} dark>{icon}</DockApp>
        ))}
      </div>
      <i className="mt-[14px] ml-[22px] h-[84px] w-[2px] shrink-0 bg-[#5a3689]" />
      <svg className="mt-[7px] ml-[34px] h-[90px] w-[70px] shrink-0" viewBox="0 0 70 90">
        <path d="M2 13 10 80q1 8 25 8t25-8l8-67z" fill="url(#can)" />
        <path d="M10 26q8 8 25 7t22-8l-5 50q-17 6-35 0z" fill="#cbc9ce" opacity=".55" />
        <path d="M12 30l5 48M58 30l-5 48" stroke="#f6f5f8" strokeWidth="2" opacity=".7" />
        <path d="m4 12 6-7 8 2 6-6 8 5 4 5 5-9 8 5 8-1 5 8-5 8-24 3-20-1z" fill="#e6e4ea" />
        <path d="m10 7 9 3-5 6zM28 4l6 3-3 5zM46 5l9 5-8 3zM15 19l14-6 6 9zM40 14l8-4 4 10-10 1zM56 13l6-1-2 7z" fill="#55525a" />
        <path d="m20 14 8-4 4 6-6 2z" fill="#4cb3d8" /><path d="m42 9 6 4-5 5z" fill="#c0683e" /><path d="m30 11 4 1-1 5z" fill="#6abf6a" />
        <path d="M1.500 13q2 11 33.500 11t33.500-11" fill="none" stroke="#f5f3f8" strokeWidth="1.600" opacity=".8" />
      </svg>
    </div>
  );
}

export default function App() {
  return (
    <div className="relative flex h-[1800px] w-[2880px] flex-col overflow-hidden bg-[#0b0425] font-['Inter',sans-serif]">
      <Wallpaper />
      <Defs />
      <MenuBar />
      <div className="relative">
        <Toolbar />
        <TabStrip />
        <Page />
      </div>
      <Dock />
    </div>
  );
}
